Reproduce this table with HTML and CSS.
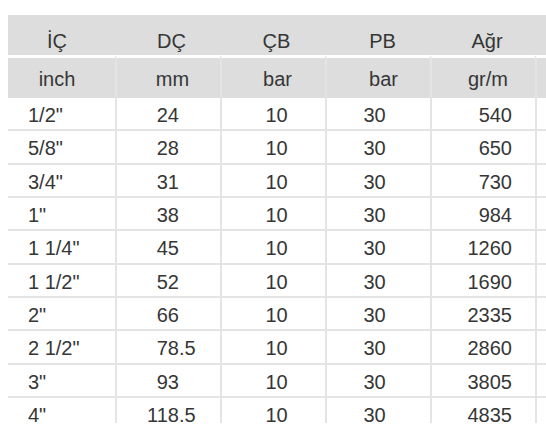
FILE: index.html
```html
<!DOCTYPE html>
<html lang="tr">
<head>
<meta charset="utf-8">
<title>Hortum ölçüleri</title>
<link rel="stylesheet" href="styles.css">
</head>
<body>
<div class="spec">
  <div class="row head1">
    <div class="c c1">İÇ</div>
    <div class="c c2">DÇ</div>
    <div class="c c3">ÇB</div>
    <div class="c c4">PB</div>
    <div class="c c5">Ağr</div>
    <div class="c c6"></div>
  </div>
  <div class="row head2">
    <div class="c c1">inch</div>
    <div class="c c2">mm</div>
    <div class="c c3">bar</div>
    <div class="c c4">bar</div>
    <div class="c c5">gr/m</div>
    <div class="c c6"></div>
  </div>
  <div class="row data"><div class="c c1">1/2"</div><div class="c c2"><span class="int">24</span></div><div class="c c3">10</div><div class="c c4">30</div><div class="c c5">540</div><div class="c c6"></div></div>
  <div class="row data"><div class="c c1">5/8"</div><div class="c c2"><span class="int">28</span></div><div class="c c3">10</div><div class="c c4">30</div><div class="c c5">650</div><div class="c c6"></div></div>
  <div class="row data"><div class="c c1">3/4"</div><div class="c c2"><span class="int">31</span></div><div class="c c3">10</div><div class="c c4">30</div><div class="c c5">730</div><div class="c c6"></div></div>
  <div class="row data"><div class="c c1">1"</div><div class="c c2"><span class="int">38</span></div><div class="c c3">10</div><div class="c c4">30</div><div class="c c5">984</div><div class="c c6"></div></div>
  <div class="row data"><div class="c c1">1 1/4"</div><div class="c c2"><span class="int">45</span></div><div class="c c3">10</div><div class="c c4">30</div><div class="c c5">1260</div><div class="c c6"></div></div>
  <div class="row data"><div class="c c1">1 1/2"</div><div class="c c2"><span class="int">52</span></div><div class="c c3">10</div><div class="c c4">30</div><div class="c c5">1690</div><div class="c c6"></div></div>
  <div class="row data"><div class="c c1">2"</div><div class="c c2"><span class="int">66</span></div><div class="c c3">10</div><div class="c c4">30</div><div class="c c5">2335</div><div class="c c6"></div></div>
  <div class="row data"><div class="c c1">2 1/2"</div><div class="c c2"><span class="int">78</span>.5</div><div class="c c3">10</div><div class="c c4">30</div><div class="c c5">2860</div><div class="c c6"></div></div>
  <div class="row data"><div class="c c1">3"</div><div class="c c2"><span class="int">93</span></div><div class="c c3">10</div><div class="c c4">30</div><div class="c c5">3805</div><div class="c c6"></div></div>
  <div class="row data last"><div class="c c1">4"</div><div class="c c2"><span class="int">118</span>.5</div><div class="c c3">10</div><div class="c c4">30</div><div class="c c5">4835</div><div class="c c6"></div></div>
</div>
</body>
</html>
```
FILE: styles.css
```css
html, body {
  margin: 0;
  padding: 0;
  background: #ffffff;
  overflow: hidden;
}

body {
  font-family: "Liberation Sans", Arial, sans-serif;
  font-size: 20px;
  color: #363636;
}

.spec {
  margin: 15px 0 0 8px;
  width: 538px;
}

.row {
  display: grid;
  grid-template-columns: 107px 105px 105px 105px 105px 11px;
}

.c {
  box-sizing: border-box;
  line-height: 20px;
  white-space: nowrap;
}

/* header rows */
.head1 {
  background: #dcdddc;
  height: 40px;
}

.head1 .c {
  padding-top: 16px;
  text-align: center;
}

.head2 {
  background: #dcdddc;
  height: 43px;
}

.head2 .c {
  border-top: 3px solid #ffffff;
  padding-top: 11px;
  text-align: center;
}

.head2 .c2, .head2 .c3, .head2 .c4, .head2 .c5, .head2 .c6 {
  border-left: 2px solid #e3e4e3;
}

.head1 .c1, .head2 .c1 { padding-right: 9px; }
.head1 .c2, .head2 .c2 { padding-left: 8px; }
.head1 .c3, .head2 .c3 { padding-left: 8px; }
.head1 .c4, .head2 .c4 { padding-left: 10px; }
.head1 .c5, .head2 .c5 { padding-left: 9px; }

/* data rows */
.data {
  height: 33.33px;
}

.data .c {
  padding-top: 7px;
  border-bottom: 2px solid #e4e4e4;
}

.data .c2, .data .c3, .data .c4, .data .c5, .data .c6 {
  border-left: 2px solid #e4e4e4;
}

.data.last {
  height: 25px;
}

.data.last .c {
  border-bottom: none;
}

.data .c1 {
  padding-left: 20px;
}

.data .c2 .int {
  display: inline-block;
  width: 62px;
  text-align: right;
}

.data .c3 {
  text-align: center;
  padding-left: 6px;
}

.data .c4 {
  text-align: center;
  padding-right: 8px;
}

.data .c5 {
  text-align: right;
  padding-right: 23px;
}
```
